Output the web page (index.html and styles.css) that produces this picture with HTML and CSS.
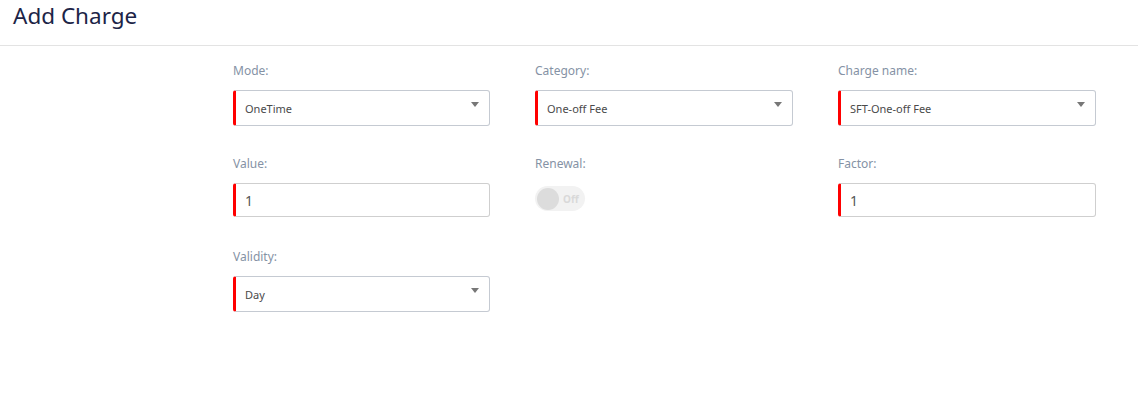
FILE: index.html
```html
<!DOCTYPE html>
<html>
<head>
<meta charset="utf-8">
<link rel="stylesheet" href="styles.css">
</head>
<body>
<header class="header"><h1 class="title">Add Charge</h1></header>
<main class="form">
  <div class="group">
    <label class="label">Mode:</label>
    <div class="select"><span>OneTime</span><i class="caret"></i></div>
  </div>
  <div class="group">
    <label class="label">Category:</label>
    <div class="select"><span>One-off Fee</span><i class="caret"></i></div>
  </div>
  <div class="group">
    <label class="label">Charge name:</label>
    <div class="select"><span>SFT-One-off Fee</span><i class="caret"></i></div>
  </div>
  <div class="group">
    <label class="label">Value:</label>
    <div class="input">1</div>
  </div>
  <div class="group">
    <label class="label">Renewal:</label>
    <div class="toggle"><span class="knob"></span><span class="toggle-text">Off</span></div>
  </div>
  <div class="group">
    <label class="label">Factor:</label>
    <div class="input">1</div>
  </div>
  <div class="group">
    <label class="label">Validity:</label>
    <div class="select"><span>Day</span><i class="caret"></i></div>
  </div>
</main>
</body>
</html>
```
FILE: styles.css
```css
* { box-sizing: border-box; }
body {
  margin: 0;
  background: #fff;
  font-family: "Noto Sans", "Open Sans", sans-serif;
}
.header {
  height: 46px;
  border-bottom: 1px solid #e3e3e3;
  padding: 0 13px;
}
.title {
  margin: 0;
  font-weight: 400;
  font-size: 22.5px;
  line-height: 30px;
  color: #1c2447;
  padding-top: 1px;
}
.form {
  display: grid;
  grid-template-columns: 257px 258px 258px;
  column-gap: 45px;
  row-gap: 30px;
  padding: 17px 0 0 233px;
}
.group {
  display: flex;
  flex-direction: column;
  min-height: 63px;
}
.label {
  font-size: 12px;
  line-height: 16px;
  color: #8592a5;
  margin-bottom: 11px;
}
.select, .input {
  display: flex;
  align-items: center;
  width: 100%;
  border: 1px solid #c5cad2;
  border-left: 3px solid #f00;
  border-radius: 3px;
  background: #fff;
}
.select {
  height: 36px;
  padding: 0 10px 0 9px;
  font-size: 11px;
  color: #4a4a4a;
  justify-content: space-between;
}
.caret {
  width: 0;
  height: 0;
  border-left: 4px solid transparent;
  border-right: 4px solid transparent;
  border-top: 5px solid #777;
  margin-top: -8px;
}
.input {
  height: 34px;
  padding: 0 9px;
  font-size: 14px;
  color: #555;
  border-color: #cfcfcf;
  border-left-color: #f00;
}
.toggle {
  margin-top: 3px;
  width: 50px;
  height: 25px;
  border-radius: 13px;
  background: #f2f2f2;
  display: flex;
  align-items: center;
  padding: 0 2px;
  gap: 4px;
}
.knob {
  width: 22px;
  height: 22px;
  border-radius: 50%;
  background: #dcdcdc;
}
.toggle-text {
  font-size: 10px;
  font-weight: 700;
  color: #d9d9d9;
}
```
